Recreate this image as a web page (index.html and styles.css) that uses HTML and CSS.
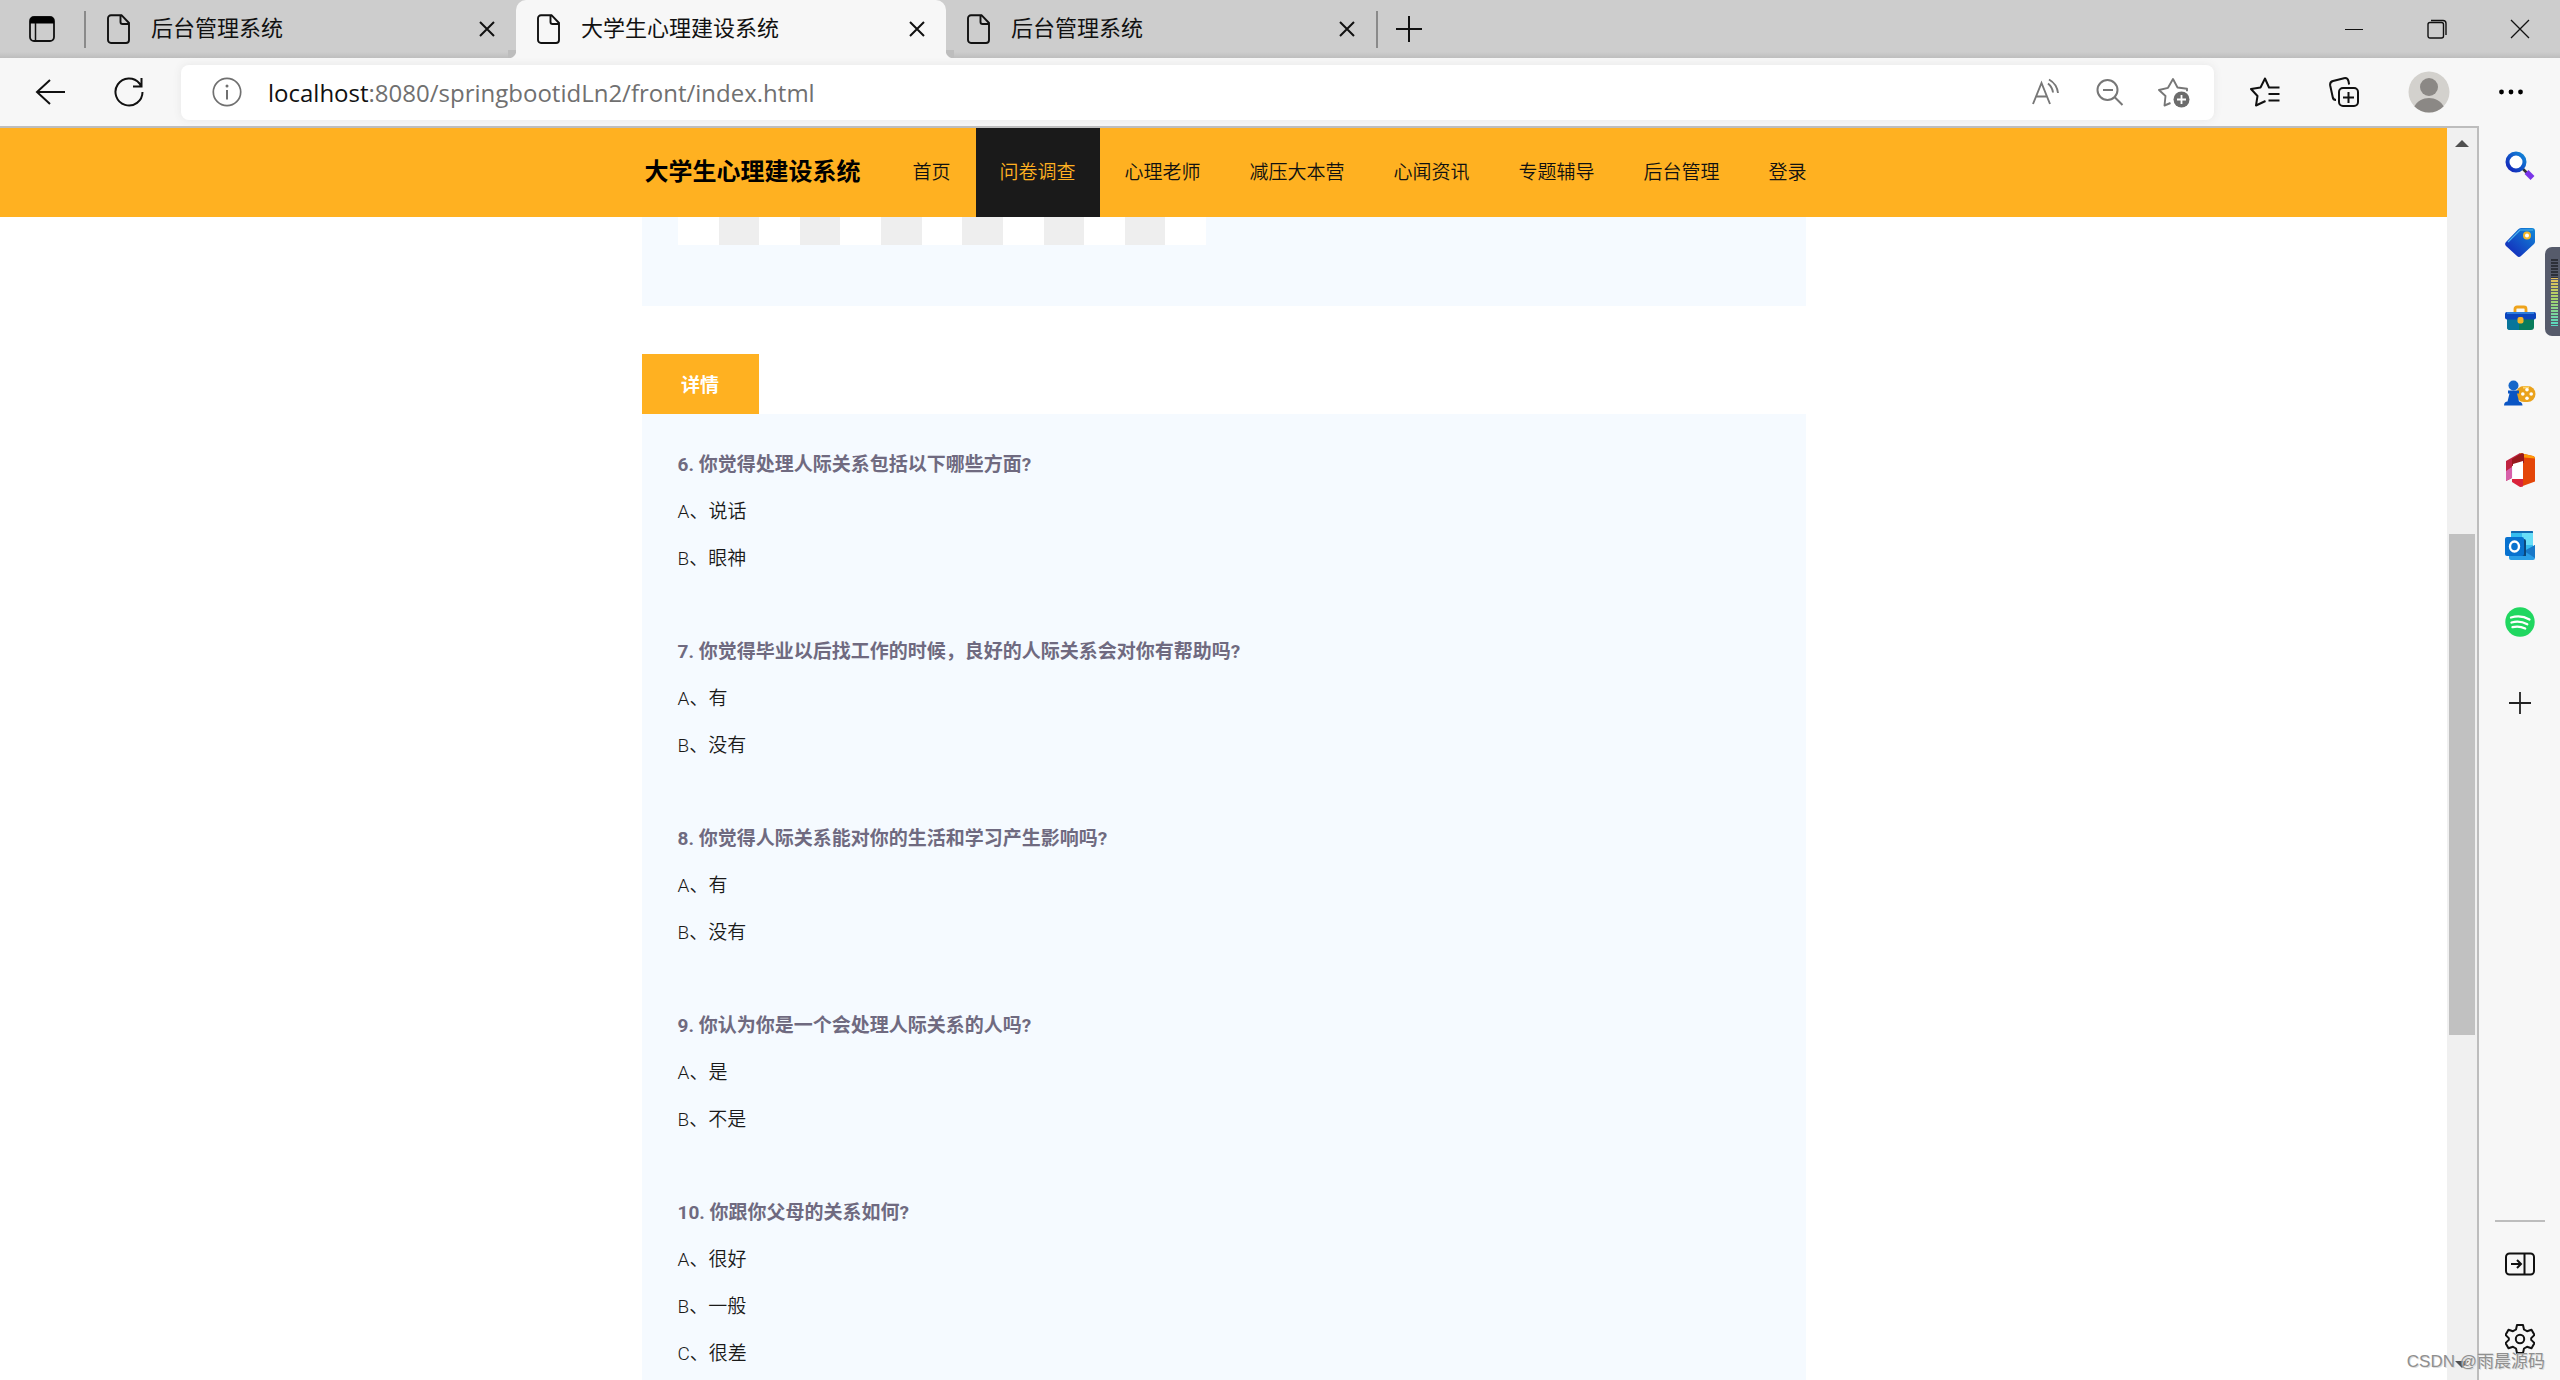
FILE: index.html
```html
<!DOCTYPE html>
<html lang="zh-CN">
<head>
<meta charset="utf-8">
<meta name="viewport" content="width=device-width, initial-scale=1">
<title>大学生心理建设系统</title>
<link rel="stylesheet" href="styles.css">
</head>
<body>
<svg class="defs" aria-hidden="true">
  <symbol id="file" viewBox="0 0 24 30"><path d="M4 1.2h10.5L22 9v17a3 3 0 0 1-3 3H4a3 3 0 0 1-3-3V4.200a3 3 0 0 1 3-3zM13.500 1.500V8a2 2 0 0 0 2 2H22" fill="none" stroke="#111" stroke-width="1.900"/></symbol>
  <symbol id="cross" viewBox="0 0 16 16"><path d="M1 1l14 14M15 1L1 15" stroke="#111" stroke-width="2" fill="none"/></symbol>
</svg>
<header class="browser">
  <div class="tabstrip">
    <button class="icon workspace" aria-label="标签操作"><svg width="26" height="26" viewBox="0 0 26 26"><rect x="1" y="1" width="24" height="24" rx="4" fill="none" stroke="#111" stroke-width="1.800"/><path d="M1 7.500V5a4 4 0 0 1 4-4h16a4 4 0 0 1 4 4v2.500z"/><path d="M6.500 7v18" stroke="#111" stroke-width="1.500"/></svg></button>
    <span class="rule"></span>
    <div class="tab"><button class="tab-title"><svg width="24" height="30"><use href="#file"/></svg>后台管理系统</button><button class="icon" aria-label="关闭"><svg width="16" height="16"><use href="#cross"/></svg></button></div>
    <div class="tab active"><button class="tab-title"><svg width="24" height="30"><use href="#file"/></svg>大学生心理建设系统</button><button class="icon" aria-label="关闭"><svg width="16" height="16"><use href="#cross"/></svg></button></div>
    <div class="tab"><button class="tab-title"><svg width="24" height="30"><use href="#file"/></svg>后台管理系统</button><button class="icon" aria-label="关闭"><svg width="16" height="16"><use href="#cross"/></svg></button></div>
    <span class="rule"></span>
    <button class="icon new-tab" aria-label="新建标签页"><svg width="26" height="26" viewBox="0 0 26 26"><path d="M13 0v26M0 13h26" stroke="#111" stroke-width="2"/></svg></button>
    <div class="window-buttons">
      <button class="icon" aria-label="最小化"><svg width="20" height="20" viewBox="0 0 20 20"><path d="M1 10.500h18" stroke="#111"/></svg></button>
      <button class="icon" aria-label="还原"><svg width="20" height="20" viewBox="0 0 20 20"><rect x="1" y="3.500" width="15.500" height="15.500" rx="2" fill="none" stroke="#111" stroke-width="1.400"/><path d="M4 1.500h12a3 3 0 0 1 3 3V16" fill="none" stroke="#111" stroke-width="1.400"/></svg></button>
      <button class="icon" aria-label="关闭窗口"><svg width="20" height="20" viewBox="0 0 20 20"><path d="M1 1l18 18M19 1L1 19" stroke="#111" stroke-width="1.300"/></svg></button>
    </div>
  </div>
  <div class="toolbar">
    <button class="icon" aria-label="返回"><svg width="30" height="30" viewBox="0 0 30 30"><path d="M15 3L2 15l13 12M2 15h28" fill="none" stroke="#111" stroke-width="2"/></svg></button>
    <button class="icon" aria-label="刷新"><svg width="30" height="30" viewBox="0 0 30 30"><path d="M28.500 15A13.500 13.500 0 1 1 25.500 6.500L27 9M27.500 1v8.500H19" fill="none" stroke="#111" stroke-width="2"/></svg></button>
    <form class="address">
      <svg width="30" height="30" viewBox="0 0 30 30"><circle cx="15" cy="15" r="13.700" fill="none" stroke="#707070" stroke-width="1.700"/><circle cx="15" cy="9" r="1.500" fill="#707070"/><path d="M15 13v9.500" stroke="#707070" stroke-width="2"/></svg>
      <label for="url">localhost</label><input id="url" type="text" value=":8080/springbootidLn2/front/index.html">
      <div class="address-tools">
        <button type="button" class="icon" aria-label="朗读"><svg width="32" height="32" viewBox="0 0 32 32" fill="none" stroke="#777" stroke-width="1.900"><path d="M3 28L11.500 7l8.500 21M6 20.500h11.500M18 7.500a14 14 0 0 1 5 9M19 3.500a18 18 0 0 1 9 13.500"/></svg></button>
        <button type="button" class="icon" aria-label="缩小"><svg width="32" height="32" viewBox="0 0 32 32" fill="none" stroke="#777" stroke-width="2"><circle cx="13.500" cy="14" r="10"/><path d="M9 14h10M20.500 21l8 8"/></svg></button>
        <button type="button" class="icon" aria-label="收藏此页"><svg width="32" height="32" viewBox="0 0 32 32"><path d="M12.500 27l-6 2.500 1-9.500L1 14l9-2.200L15 3l4.500 8.500 9.500 1.300v2.500" fill="none" stroke="#777" stroke-width="1.900" stroke-linejoin="round"/><circle cx="23.500" cy="23.500" r="8" fill="#6c6c6c"/><path d="M23.500 19v9M19 23.500h9" stroke="#fff" stroke-width="1.800"/></svg></button>
      </div>
    </form>
    <div class="browser-tools">
      <button class="icon" aria-label="收藏夹"><svg width="30" height="30" viewBox="0 0 30 30" fill="none" stroke="#111" stroke-width="2" stroke-linejoin="round"><path d="M29.500 10.500H19L15 1.500l-4.500 9L1 12l6.500 7L6 28.500l9.500-4.500M18.500 17h11M18.500 23.500h11"/></svg></button>
      <button class="icon" aria-label="集锦"><svg width="30" height="30" viewBox="0 0 30 30" fill="none" stroke="#111" stroke-width="2"><rect x="10" y="11" width="19" height="18" rx="4"/><path d="M19.500 15v11M14 20.500h11M7 23c-2 0-3-1-3.300-3L1.200 8.500C.8 6 2 4.500 4 4L15 1.200c2.500-.5 4 .8 4.500 3l.6 3.300"/></svg></button>
      <button class="icon" aria-label="用户"><svg width="42" height="42" viewBox="0 0 42 42"><clipPath id="face"><circle cx="21" cy="21" r="20.500"/></clipPath><g clip-path="url(#face)"><path d="M0 0h42v42H0z" fill="#d3d1cd"/><circle cx="21" cy="16" r="9" fill="#8b8885"/><path d="M6 36c3-6 9-9 15-9s12 3 15 9v6H6z" fill="#8b8885"/></g></svg></button>
      <button class="icon" aria-label="设置及其他"><svg width="24" height="24" viewBox="0 0 24 24"><circle cx="2.500" cy="12" r="2.400"/><circle cx="12" cy="12" r="2.400"/><circle cx="21.500" cy="12" r="2.400"/></svg></button>
    </div>
  </div>
</header>
<div class="workspace-area">
  <div class="page">
    <nav class="site-nav">
      <div class="container nav-row">
        <a class="brand" href="#">大学生心理建设系统</a>
        <a href="#">首页</a><a class="current" href="#">问卷调查</a><a href="#">心理老师</a><a href="#">减压大本营</a><a href="#">心闻资讯</a><a href="#">专题辅导</a><a href="#">后台管理</a><a href="#">登录</a>
      </div>
    </nav>
    <main class="container">
      <section class="panel cover"><div class="checker"></div></section>
      <button class="detail-tab">详情</button>
      <section class="panel questions">
        <article><h3>6. 你觉得处理人际关系包括以下哪些方面?</h3><p>A、说话</p><p>B、眼神</p></article>
        <article><h3>7. 你觉得毕业以后找工作的时候，良好的人际关系会对你有帮助吗?</h3><p>A、有</p><p>B、没有</p></article>
        <article><h3>8. 你觉得人际关系能对你的生活和学习产生影响吗?</h3><p>A、有</p><p>B、没有</p></article>
        <article><h3>9. 你认为你是一个会处理人际关系的人吗?</h3><p>A、是</p><p>B、不是</p></article>
        <article><h3>10. 你跟你父母的关系如何?</h3><p>A、很好</p><p>B、一般</p><p>C、很差</p></article>
      </section>
    </main>
  </div>
  <div class="scrollbar">
    <svg width="14" height="7" viewBox="0 0 14 7"><path d="M0 7l7-7 7 7z" fill="#505050"/></svg>
    <div class="track"><div class="thumb"></div></div>
    <svg width="14" height="7" viewBox="0 0 14 7"><path d="M0 0l7 7 7-7z" fill="#505050"/></svg>
  </div>
  <aside class="sidebar">
    <div class="apps">
      <button class="icon" aria-label="搜索"><svg width="32" height="32" viewBox="0 0 32 32"><defs><linearGradient id="blue" x1="0" y1="1" x2="1" y2="0"><stop stop-color="#1420b8"/><stop offset="1" stop-color="#1189d8"/></linearGradient></defs><path d="M19 19l4 4" stroke="#333" stroke-width="2.500"/><circle cx="12" cy="12" r="8.500" fill="#fff" stroke="url(#blue)" stroke-width="4"/><path d="M22.500 22l6 6" stroke="#7a34e8" stroke-width="5.500"/></svg></button>
      <button class="icon" aria-label="购物"><svg width="32" height="32" viewBox="0 0 32 32"><path d="M17 2h11a3 3 0 0 1 3 3v10a4 4 0 0 1-1 3L17 30a3 3 0 0 1-4 0L2 20a3 3 0 0 1 0-4L14 3.500A4 4 0 0 1 17 2z" fill="url(#blue)"/><path d="M4 16L16 4h13" stroke="#4bb4ed" stroke-width="1.200" fill="none"/><circle cx="23" cy="9.500" r="3" fill="#fff" stroke="#f4b72a" stroke-width="2"/></svg></button>
      <button class="icon" aria-label="工具"><svg width="32" height="32" viewBox="0 0 32 32"><path d="M11 11V7a2 2 0 0 1 2-2h7a2 2 0 0 1 2 2v4" fill="none" stroke="#eea31b" stroke-width="2.800"/><path d="M3 16h27v9a3 3 0 0 1-3 3H6a3 3 0 0 1-3-3z" fill="#087c5c"/><path d="M3 17h12v11H6a3 3 0 0 1-3-3z" fill="#08759b"/><rect x="1" y="10" width="31" height="7.500" rx="2" fill="#0b45bd"/><path d="M3 11h27" stroke="#3b8fe4" stroke-width="1.500"/><rect x="13.500" y="15" width="6" height="6.500" rx="2" fill="#f6b527"/></svg></button>
      <button class="icon" aria-label="游戏"><svg width="32" height="32" viewBox="0 0 32 32"><rect x="12" y="8" width="19.500" height="16" rx="8" fill="#eaa21c"/><path d="M19 9.500h6" stroke="#ffd66b" stroke-width="2"/><g fill="#fff"><circle cx="23" cy="11.800" r="1.800"/><circle cx="18.800" cy="16" r="1.800"/><circle cx="27.200" cy="16" r="1.800"/><circle cx="23" cy="20.200" r="1.800"/></g><circle cx="9.500" cy="7.500" r="5" fill="#1767c9"/><path d="M4 12.500h11v3h-2l2 8c2 .5 3.500 1.500 3.500 4H0c0-3 1.500-3.700 3.500-4l2-8H4z" fill="#0a55c4"/></svg></button>
      <button class="icon" aria-label="Office"><svg width="32" height="34" viewBox="0 0 32 34"><path d="M16 0v9l-8 3v13l-6 3V8z" fill="#c02340"/><path d="M2 18l6-4v11l-6 3z" fill="#d75fa9"/><path d="M16 0l13 3c1.500.5 2 1.500 2 2.500v23L16 34z" fill="#e44508"/><path d="M16 0l13 3c1.500.5 2 1.500 2 2.500L20 4.500z" fill="#ff9a09"/><path d="M8 6l10-6 2 1v9l-12 3z" fill="#98191d"/><path d="M9 11l10-3v18H7l2-1z" fill="#fff"/><path d="M8 26h11v7.500l-3 .5-8-5z" fill="#da233b"/></svg></button>
      <button class="icon" aria-label="Outlook"><svg width="32" height="32" viewBox="0 0 32 32"><rect x="7" y="1" width="22" height="20" rx="1" fill="#35bdf0"/><path d="M7 3V2a1 1 0 0 1 1-1h20a1 1 0 0 1 1 1v1z" fill="#1269b0"/><path d="M18 3h11v12H18z" fill="#67def8"/><path d="M5 18l16 4 10-7v13a2 2 0 0 1-2 2H7a2 2 0 0 1-2-2z" fill="#2a9ee7"/><path d="M31 15L20 21l11 7z" fill="#1878c8"/><path d="M8 9h12a2 2 0 0 1 2 2v15H8z" fill="#0b477c"/><rect x="1" y="7" width="19" height="19" rx="2" fill="#0872cf"/><ellipse cx="10.500" cy="16.500" rx="4.500" ry="5" fill="none" stroke="#fff" stroke-width="2.400"/></svg></button>
      <button class="icon" aria-label="Spotify"><svg width="30" height="30" viewBox="0 0 30 30"><circle cx="15" cy="15" r="14.700" fill="#20d760"/><path d="M6 10.500c6-1.800 13-1.200 18.500 2M6.500 15.500c5.500-1.500 11-.8 15.800 1.700M7.500 20.200c4.500-1.200 8.800-.6 12.700 1.300" fill="none" stroke="#fff" stroke-width="2.300" stroke-linecap="round"/></svg></button>
      <button class="icon" aria-label="添加"><svg width="22" height="22" viewBox="0 0 22 22"><path d="M11 0v22M0 11h22" stroke="#222" stroke-width="1.800"/></svg></button>
    </div>
    <div class="side-bottom">
      <button class="icon" aria-label="隐藏侧栏"><svg width="30" height="24" viewBox="0 0 30 24" fill="none" stroke="#111" stroke-width="2"><rect x="1" y="1.500" width="28" height="21" rx="3.500"/><path d="M19.500 2v20M6 12h10M12 8l4 4-4 4"/></svg></button>
      <button class="icon" aria-label="设置"><svg width="30" height="30" viewBox="0 0 30 30" fill="none" stroke="#111" stroke-width="2" stroke-linejoin="round"><path d="M12 1h6l1 4.500 3 1.700 4.500-1.500 3 5.200-3.300 3.200v1.800l3.300 3.200-3 5.200-4.500-1.500-3 1.700-1 4.500h-6l-1-4.500-3-1.700-4.500 1.500-3-5.200 3.300-3.200v-1.800L.5 10.900l3-5.200L8 7.200l3-1.700z"/><circle cx="15" cy="15" r="4.200"/></svg></button>
    </div>
    <div class="meter"><span></span></div>
  </aside>
  <div class="watermark">CSDN @雨晨源码</div>
</div>
</body>
</html>
```
FILE: styles.css
```css
* { box-sizing: border-box; }
body {
  margin: 0;
  height: 100vh;
  display: flex;
  flex-direction: column;
  overflow: hidden;
  background: #f7f7f7;
  color: #111;
  font-family: Roboto, "Noto Sans CJK SC", sans-serif;
}
button, input { font: inherit; color: inherit; border: 0; padding: 0; background: none; }
a { color: inherit; text-decoration: none; }
svg { display: block; flex: none; }
.defs { position: absolute; width: 0; height: 0; }
.icon { display: grid; place-items: center; flex: none; }

/* tab strip */
.tabstrip {
  display: flex;
  align-items: center;
  height: 58px;
  background: linear-gradient(#cdcdcd 52px, #bdbdbd);
}
.workspace { width: 84px; }
.rule { width: 2px; height: 37px; background: #8a8a8a; }
.tab {
  position: relative;
  display: flex;
  align-items: center;
  flex: 0 1 430px;
  height: 58px;
  padding: 0 21px;
}
.tab-title {
  display: flex;
  align-items: center;
  flex: 1;
  gap: 20px;
  font-size: 22px;
  line-height: 30px;
}
.tab.active { background: #f7f7f7; border-radius: 10px 10px 0 0; }
.tab.active::before, .tab.active::after {
  content: "";
  position: absolute;
  bottom: 0;
  width: 8px;
  height: 8px;
}
.tab.active::before { left: -8px; background: radial-gradient(circle at 0 0, #bdbdbd 8px, #f7f7f7 9px); }
.tab.active::after { right: -8px; background: radial-gradient(circle at 100% 0, #bdbdbd 8px, #f7f7f7 9px); }
.new-tab { width: 62px; }
.window-buttons { display: flex; gap: 63px; margin-left: auto; padding-right: 30px; }

/* toolbar */
.toolbar {
  display: flex;
  align-items: center;
  gap: 49px;
  height: 68px;
  padding: 0 37px 0 35px;
  background: #f7f7f7;
}
.address {
  display: flex;
  align-items: center;
  flex: 1;
  height: 55px;
  margin-left: -12px;
  padding: 0 24px 0 31px;
  border-radius: 8px;
  background: #fff;
  box-shadow: 0 0 8px #e6e6e6;
  font-family: "Open Sans", sans-serif;
  font-size: 24px;
}
.address label { margin-left: 26px; color: #111; }
.address input { flex: 1; min-width: 0; color: #707070; outline: 0; }
.address-tools { display: flex; gap: 32px; }
.browser-tools { display: flex; align-items: center; gap: 49px; margin-left: -13px; }

/* content area */
.workspace-area { position: relative; display: flex; flex: 1; min-height: 0; }
.page {
  flex: 1;
  min-width: 0;
  overflow: hidden;
  border-top: 2px solid #bdbdbd;
  background: #fff;
}
.container { width: 100%; max-width: 1164px; margin: 0 auto; }
.site-nav { background: #ffb121; }
.nav-row { display: flex; gap: 1px; }
.nav-row a {
  padding: 0 24px;
  font-size: 19px;
  font-weight: 350;
  line-height: 89px;
  white-space: nowrap;
  color: #111;
}
.nav-row .brand { padding: 0 27px 0 3px; font-size: 24px; font-weight: 700; color: #000; }
.nav-row .current { background: #1a1a1a; color: #ffb121; }
.panel { background: #f5faff; }
.cover { padding: 0 36px 61px; }
.checker {
  width: 528px;
  max-width: 100%;
  height: 28px;
  background: repeating-linear-gradient(90deg, #fff 0 calc(100% / 13), #eee calc(100% / 13) calc(200% / 13));
}
.detail-tab {
  display: block;
  width: 117px;
  height: 60px;
  margin-top: 48px;
  padding-bottom: 2px;
  background: #ffb121;
  color: #fff;
  font-size: 19px;
  font-weight: 700;
}
.questions { padding: 27px 36px; }
.questions article { margin-bottom: 46px; }
.questions h3, .questions p { margin: 0; font-size: 19px; line-height: 47px; }
.questions h3 { font-weight: 700; color: #6f6a80; }
.questions p { font-weight: 350; color: #1a1a1a; }

/* scrollbar */
.scrollbar {
  display: flex;
  flex-direction: column;
  align-items: center;
  width: 32px;
  padding: 12px 0;
  border: solid #bdbdbd;
  border-width: 2px 2px 0 0;
  background: #f0f0f0;
}
.track { flex: 1; align-self: stretch; display: grid; grid-template-rows: 387fr 502fr 326fr; padding: 0 2px; }
.thumb { grid-row: 2; background: #c1c1c1; }

/* sidebar */
.sidebar {
  position: relative;
  display: flex;
  flex-direction: column;
  justify-content: space-between;
  width: 81px;
  padding: 2px 15px 4px 16px;
}
.apps { display: grid; grid-template-rows: repeat(7, 76px) 86px; }
.side-bottom { display: grid; grid-auto-rows: 75px; padding-top: 4px; border-top: 2px solid #bdbdbd; }
.meter {
  position: absolute;
  top: 121px;
  right: 0;
  width: 15px;
  height: 89px;
  padding: 11px 2px 10px 6px;
  border-radius: 7px 0 0 7px;
  background: #565b6b;
}
.meter span {
  display: block;
  height: 100%;
  background:
    repeating-linear-gradient(#565b6b 0 1px, transparent 1px 3px),
    linear-gradient(#2d3039 30%, #e6c05a 30%, #a8d46a 60%, #55d8c4);
}
.watermark {
  position: absolute;
  right: 15px;
  bottom: 6px;
  font-family: "Liberation Sans", "Noto Sans CJK SC", sans-serif;
  font-size: 17px;
  line-height: 24px;
  color: #8f8f8f;
  text-shadow: 1px 1px #ddd;
}
```
